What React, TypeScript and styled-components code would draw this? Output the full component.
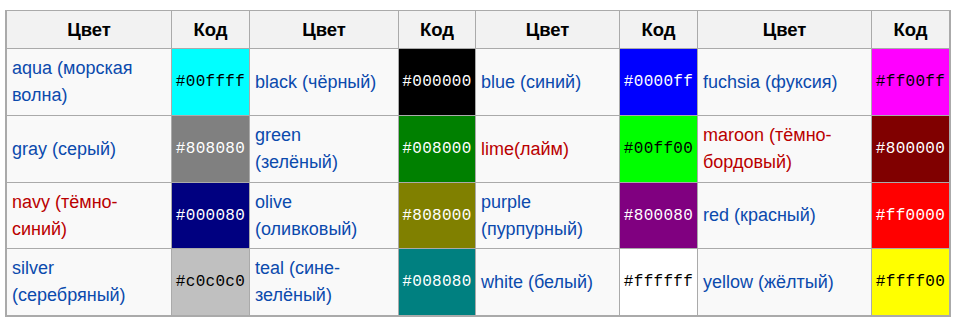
import React from 'react';
import styled, { createGlobalStyle } from 'styled-components';

type Entry = {
  name: string[]; // строки названия
  code: string;
  fg: string; // цвет текста кода
  missing?: boolean; // красная ссылка
};

const rows: Entry[][] = [
  [
    { name: ['aqua (морская', 'волна)'], code: '#00ffff', fg: '#000' },
    { name: ['black (чёрный)'], code: '#000000', fg: '#fff' },
    { name: ['blue (синий)'], code: '#0000ff', fg: '#fff' },
    { name: ['fuchsia (фуксия)'], code: '#ff00ff', fg: '#000' },
  ],
  [
    { name: ['gray (серый)'], code: '#808080', fg: '#fff' },
    { name: ['green', '(зелёный)'], code: '#008000', fg: '#fff' },
    { name: ['lime(лайм)'], code: '#00ff00', fg: '#000', missing: true },
    { name: ['maroon (тёмно-', 'бордовый)'], code: '#800000', fg: '#fff', missing: true },
  ],
  [
    { name: ['navy (тёмно-', 'синий)'], code: '#000080', fg: '#fff', missing: true },
    { name: ['olive', '(оливковый)'], code: '#808000', fg: '#fff' },
    { name: ['purple', '(пурпурный)'], code: '#800080', fg: '#fff' },
    { name: ['red (красный)'], code: '#ff0000', fg: '#fff' },
  ],
  [
    { name: ['silver', '(серебряный)'], code: '#c0c0c0', fg: '#000' },
    { name: ['teal (сине-', 'зелёный)'], code: '#008080', fg: '#fff' },
    { name: ['white (белый)'], code: '#ffffff', fg: '#000' },
    { name: ['yellow (жёлтый)'], code: '#ffff00', fg: '#000' },
  ],
];

const App: React.FC = () => {
  return (
    <>
      <GlobalStyle />
      <Page>
        <Table>
          {rows[0].map((_, i) => (
            <React.Fragment key={`h${i}`}>
              <HeaderCell>Цвет</HeaderCell>
              <HeaderCell>Код</HeaderCell>
            </React.Fragment>
          ))}
          {rows.map((row, r) =>
            row.map((e) => (
              <React.Fragment key={`${r}-${e.code}`}>
                <NameCell $missing={!!e.missing}>
                  <span>
                    {e.name.map((line, k) => (
                      <React.Fragment key={k}>
                        {k > 0 && <br />}
                        {line}
                      </React.Fragment>
                    ))}
                  </span>
                </NameCell>
                <CodeCell $bg={e.code} $fg={e.fg}>
                  <code>{e.code}</code>
                </CodeCell>
              </React.Fragment>
            )),
          )}
        </Table>
      </Page>
    </>
  );
};

export default App;

const GlobalStyle = createGlobalStyle`
  html, body {
    margin: 0;
    padding: 0;
    background: #fff;
  }
`;

const Page = styled.div`
  padding: 10px 0 0 5px;
  font-family: 'Liberation Sans', Arial, sans-serif;
`;

const Table = styled.div`
  display: inline-grid;
  grid-template-columns: 164px 77px 148px 76px 143px 77px 173px 77px;
  grid-template-rows: 37px 66px 66px 65px 66px;
  gap: 1px;
  padding: 1px 2px 2px 2px;
  background: #aaa;
`;

const HeaderCell = styled.div`
  display: flex;
  align-items: center;
  justify-content: center;
  background: #f2f2f2;
  color: #000;
  font-size: 18.5px;
  font-weight: 700;
`;

interface NameProps {
  $missing: boolean;
}

const NameCell = styled.div<NameProps>`
  display: flex;
  align-items: center;
  padding: 0 5px;
  background: #f9f9f9;
  color: ${({ $missing }) => ($missing ? '#ba0000' : '#0b4aad')};
  font-size: 18px;
  line-height: 27px;
  white-space: nowrap;
`;

interface CodeProps {
  $bg: string;
  $fg: string;
}

const CodeCell = styled.div<CodeProps>`
  display: flex;
  align-items: center;
  justify-content: center;
  background: ${({ $bg }) => $bg};

  code {
    color: ${({ $fg }) => $fg};
    font-family: 'Liberation Mono', 'Courier New', monospace;
    font-size: 16px;
    letter-spacing: 0.3px;
  }
`;
